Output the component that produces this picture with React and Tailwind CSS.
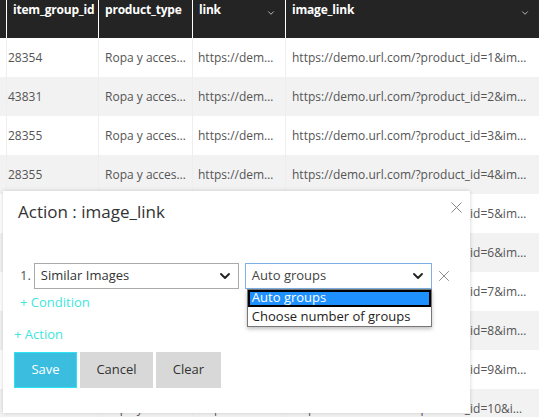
import { ChevronDown, X } from "lucide-react";

const rows = [
  { id: "28354", n: 1 },
  { id: "43831", n: 2 },
  { id: "28355", n: 3 },
  { id: "28355", n: 4 },
  { id: "28355", n: 5 },
  { id: "28355", n: 6 },
  { id: "28355", n: 7 },
  { id: "28355", n: 8 },
  { id: "28355", n: 9 },
  { id: "28355", n: 10 },
];

function HeadCell({ label, width, sort, grow }) {
  return (
    <div
      className={`relative h-full border-r border-white px-[6px] pt-[1px] text-[12px] font-bold tracking-[-0.2px] text-white ${grow ? "flex-1 border-r-0" : ""}`}
      style={grow ? undefined : { width }}
    >
      <span className="whitespace-nowrap">{label}</span>
      {sort && (
        <ChevronDown
          size={10}
          strokeWidth={2}
          className="absolute right-[9px] top-[8px] text-gray-300"
        />
      )}
    </div>
  );
}

export default function App() {
  return (
    <div
      className="relative h-[417px] w-[539px] overflow-hidden bg-white"
      style={{ fontFamily: '"Open Sans", "Liberation Sans", sans-serif' }}
    >
      {/* ── Table header ── */}
      <div className="flex h-[38px] bg-[#242424]">
        <div className="h-full w-[7px] border-r border-white" />
        <HeadCell label="item_group_id" width={92} />
        <HeadCell label="product_type" width={94} sort />
        <HeadCell label="link" width={93} sort />
        <HeadCell label="image_link" grow sort />
      </div>

      {/* ── Table body ── */}
      {rows.map((r, i) => (
        <div
          key={r.n}
          className={`flex h-[39px] items-center text-[12px] text-[#555] ${i % 2 ? "bg-[#f2f2f2]" : "bg-white"}`}
        >
          <div className="h-full w-[7px] border-r border-[#eee]" />
          <div className="flex h-full w-[92px] items-center border-r border-[#eee] pl-[1px]">{r.id}</div>
          <div className="flex h-full w-[94px] items-center border-r border-[#eee] pl-[6px] whitespace-nowrap">Ropa y acces…</div>
          <div className="flex h-full w-[93px] items-center border-r border-[#eee] pl-[5px] whitespace-nowrap">https://dem…</div>
          <div className="flex h-full flex-1 items-center pl-[6px] whitespace-nowrap">
            {r.n < 10
              ? `https://demo.url.com/?product_id=${r.n}&im…`
              : "https://demo.url.com/?product_id=10&i…"}
          </div>
        </div>
      ))}

      {/* ── Action dialog ── */}
      <div className="absolute left-[3px] top-[191px] h-[222px] w-[467px] bg-white px-[11px] pt-[8px] shadow-[0_0_4px_rgba(0,0,0,0.18)]">
        <div className="flex items-start justify-between">
          <h2 className="pl-[4px] text-[17px] text-[#333]">Action : image_link</h2>
          <X size={19} strokeWidth={1.1} className="-mr-[7px] -mt-[1px] text-[#777]" />
        </div>

        <div className="mt-[38px] flex items-center pl-[6px] text-[13px] text-[#333]">
          <span className="mr-[3px] text-[#555]">1.</span>
          <div className="flex h-[26px] w-[205px] items-center justify-between border border-[#aaa] pl-[6px] pr-[5px]">
            <span>Similar Images</span>
            <ChevronDown size={16} strokeWidth={2.8} className="text-[#222]" />
          </div>
          <div className="relative ml-[6px] flex h-[26px] w-[187px] items-center justify-between border border-[#7fb0e3] pl-[6px] pr-[5px]">
            <span className="text-[#444]">Auto groups</span>
            <ChevronDown size={16} strokeWidth={2.8} className="text-[#222]" />

            {/* open option list */}
            <div className="absolute left-[1px] top-[25px] w-[185px] border border-[#777] bg-white shadow-[0_2px_4px_rgba(0,0,0,0.25)]">
              <div className="h-[17px] bg-[#1e90ff] pl-[4px] leading-[15px] text-white outline-2 -outline-offset-2 outline-black">
                Auto groups
              </div>
              <div className="h-[19px] pl-[4px] leading-[18px] text-[#222]">Choose number of groups</div>
            </div>
          </div>
          <X size={18} strokeWidth={1.1} className="ml-[3px] text-[#777]" />
        </div>

        <div className="mt-[4px] pl-[6px] text-[13px] text-[#40e6dc]">+ Condition</div>
        <div className="mt-[13px] text-[13px] text-[#40e6dc]">+ Action</div>

        <div className="mt-[7px] flex gap-[3px] text-[13px]">
          <button className="h-[36px] w-[63px] border border-[#2de3f0] bg-[#3bbde0] text-white">Save</button>
          <button className="h-[36px] w-[73px] bg-[#d8d8d8] text-[#333]">Cancel</button>
          <button className="h-[36px] w-[65px] bg-[#d8d8d8] text-[#333]">Clear</button>
        </div>
      </div>
    </div>
  );
}
